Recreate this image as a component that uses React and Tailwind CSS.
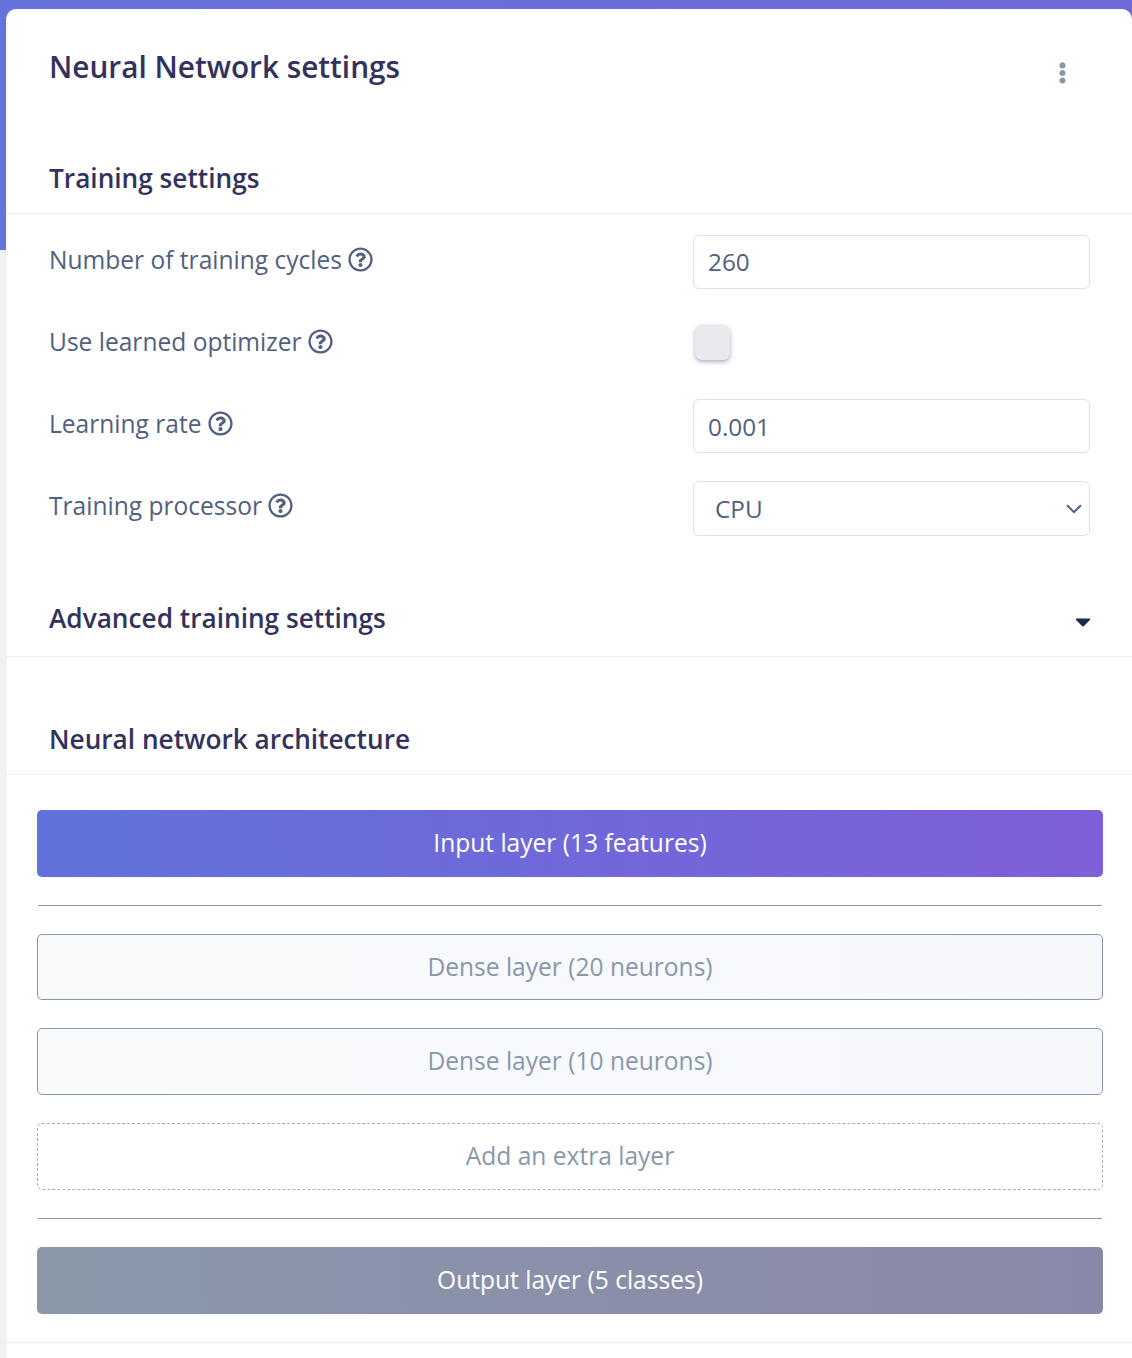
import React from "react";
import { FaRegQuestionCircle, FaEllipsisV, FaCaretDown } from "react-icons/fa";

function SectionHeading({ className, children }) {
  return (
    <div className={`flex items-start justify-between border-b border-[#eeeff2] pl-[42px] pr-[42px] ${className}`}>
      {children}
    </div>
  );
}

function Title({ children }) {
  return <h2 className="text-[26.23px] leading-[36px] font-semibold whitespace-nowrap text-[#32325d]">{children}</h2>;
}

function SettingRow({ label, children }) {
  return (
    <div className="flex h-[82px] items-start justify-between pl-[42px] pr-[42px]">
      <label className="flex h-[50px] items-center gap-[6.4px] text-[24.55px] whitespace-nowrap text-[#525f7f]">
        {label}
        <FaRegQuestionCircle className="mb-[1px] size-[25px]" />
      </label>
      <div className="w-[397px]">{children}</div>
    </div>
  );
}

function TextInput({ value, className }) {
  return (
    <input
      defaultValue={value}
      className={`block h-[54px] w-full rounded-[6px] border border-[#d5e5f2] bg-white px-[14px] text-[24.3px] text-[#525f7f] outline-none ${className}`}
    />
  );
}

function Layer({ className, children }) {
  return (
    <div className={`flex items-center justify-center rounded-[5px] text-[24.55px] whitespace-nowrap ${className}`}>
      {children}
    </div>
  );
}

export default function App() {
  return (
    <div className="h-[1358px] w-[1132px] overflow-hidden bg-[#f0f1f6] font-['Open_Sans',sans-serif]">
      <div className="h-[250px] bg-linear-[87deg,#6673da,#7069da]">
        <div className="pt-[9px] pl-[6px]">
          <main className="h-[1349px] rounded-t-[10px] border-l border-[#f3f4f8] bg-white">
            <header className="flex h-[148px] items-start justify-between pt-[37px] pr-[62px] pl-[42px]">
              <h1 className="text-[29.75px] leading-[42px] font-semibold whitespace-nowrap text-[#32325d]">
                Neural Network settings
              </h1>
              <FaEllipsisV className="mt-[16px] h-[22px] w-[15px] text-[#8898aa]" />
            </header>
            <SectionHeading className="h-[57px] pt-[3px]">
              <Title>Training settings</Title>
            </SectionHeading>

            <div className="h-[367px] pt-[21px]">
              <SettingRow label="Number of training cycles">
                <TextInput value="260" className="pb-[2px]" />
              </SettingRow>
              <SettingRow label="Use learned optimizer">
                <button
                  aria-label="Use learned optimizer"
                  className="mt-[8px] ml-[2px] block size-[35px] rounded-[7px] bg-[#e9eaee] shadow-[0_2px_4px_rgba(50,50,93,0.4)]"
                />
              </SettingRow>
              <SettingRow label="Learning rate">
                <TextInput value="0.001" />
              </SettingRow>
              <SettingRow label="Training processor">
                <div className="flex h-[55px] items-center justify-between rounded-[6px] border border-[#d5e5f2] pr-[7px] pl-[21px] text-[24.3px] text-[#525f7f]">
                  <span className="pt-[1px]">CPU</span>
                  <svg width="16" height="10" viewBox="0 0 16 10" fill="none" stroke="currentColor" strokeWidth="2">
                    <path d="M1 1.2 8 8.2 15 1.2" />
                  </svg>
                </div>
              </SettingRow>
            </div>

            <SectionHeading className="h-[76px] pt-[19px]">
              <Title>Advanced training settings</Title>
              <FaCaretDown className="mt-[9px] -mr-[1px] h-[25px] w-[16px] text-[#172b4d]" />
            </SectionHeading>
            <SectionHeading className="h-[118px] pt-[64px]">
              <Title>Neural network architecture</Title>
            </SectionHeading>

            <section className="flex h-[568px] flex-col border-b border-[#e9ecef] pt-[35px] pr-[29px] pl-[30px]">
              <Layer className="h-[67px] bg-linear-[87deg,#6172dc,#7f5eda] text-white">Input layer (13 features)</Layer>
              <div className="mx-px mt-[28px] h-px bg-[#8898aa]" />
              <Layer className="mt-[28px] h-[66px] border border-[#8898aa] bg-linear-[87deg,#f9fafc,#f6f8fc] text-[#8898aa]">
                Dense layer (20 neurons)
              </Layer>
              <Layer className="mt-[28px] h-[67px] border border-[#8898aa] bg-linear-[87deg,#f9fafc,#f6f8fc] text-[#8898aa]">
                Dense layer (10 neurons)
              </Layer>
              <Layer className="mt-[28px] h-[67px] border border-dashed border-[#adadad] text-[#8898aa]">
                Add an extra layer
              </Layer>
              <div className="mx-px mt-[28px] h-px bg-[#8898aa]" />
              <Layer className="mt-[28px] h-[67px] bg-linear-[87deg,#8a98aa,#8a88a8] text-white">Output layer (5 classes)</Layer>
            </section>
          </main>
        </div>
      </div>
    </div>
  );
}
